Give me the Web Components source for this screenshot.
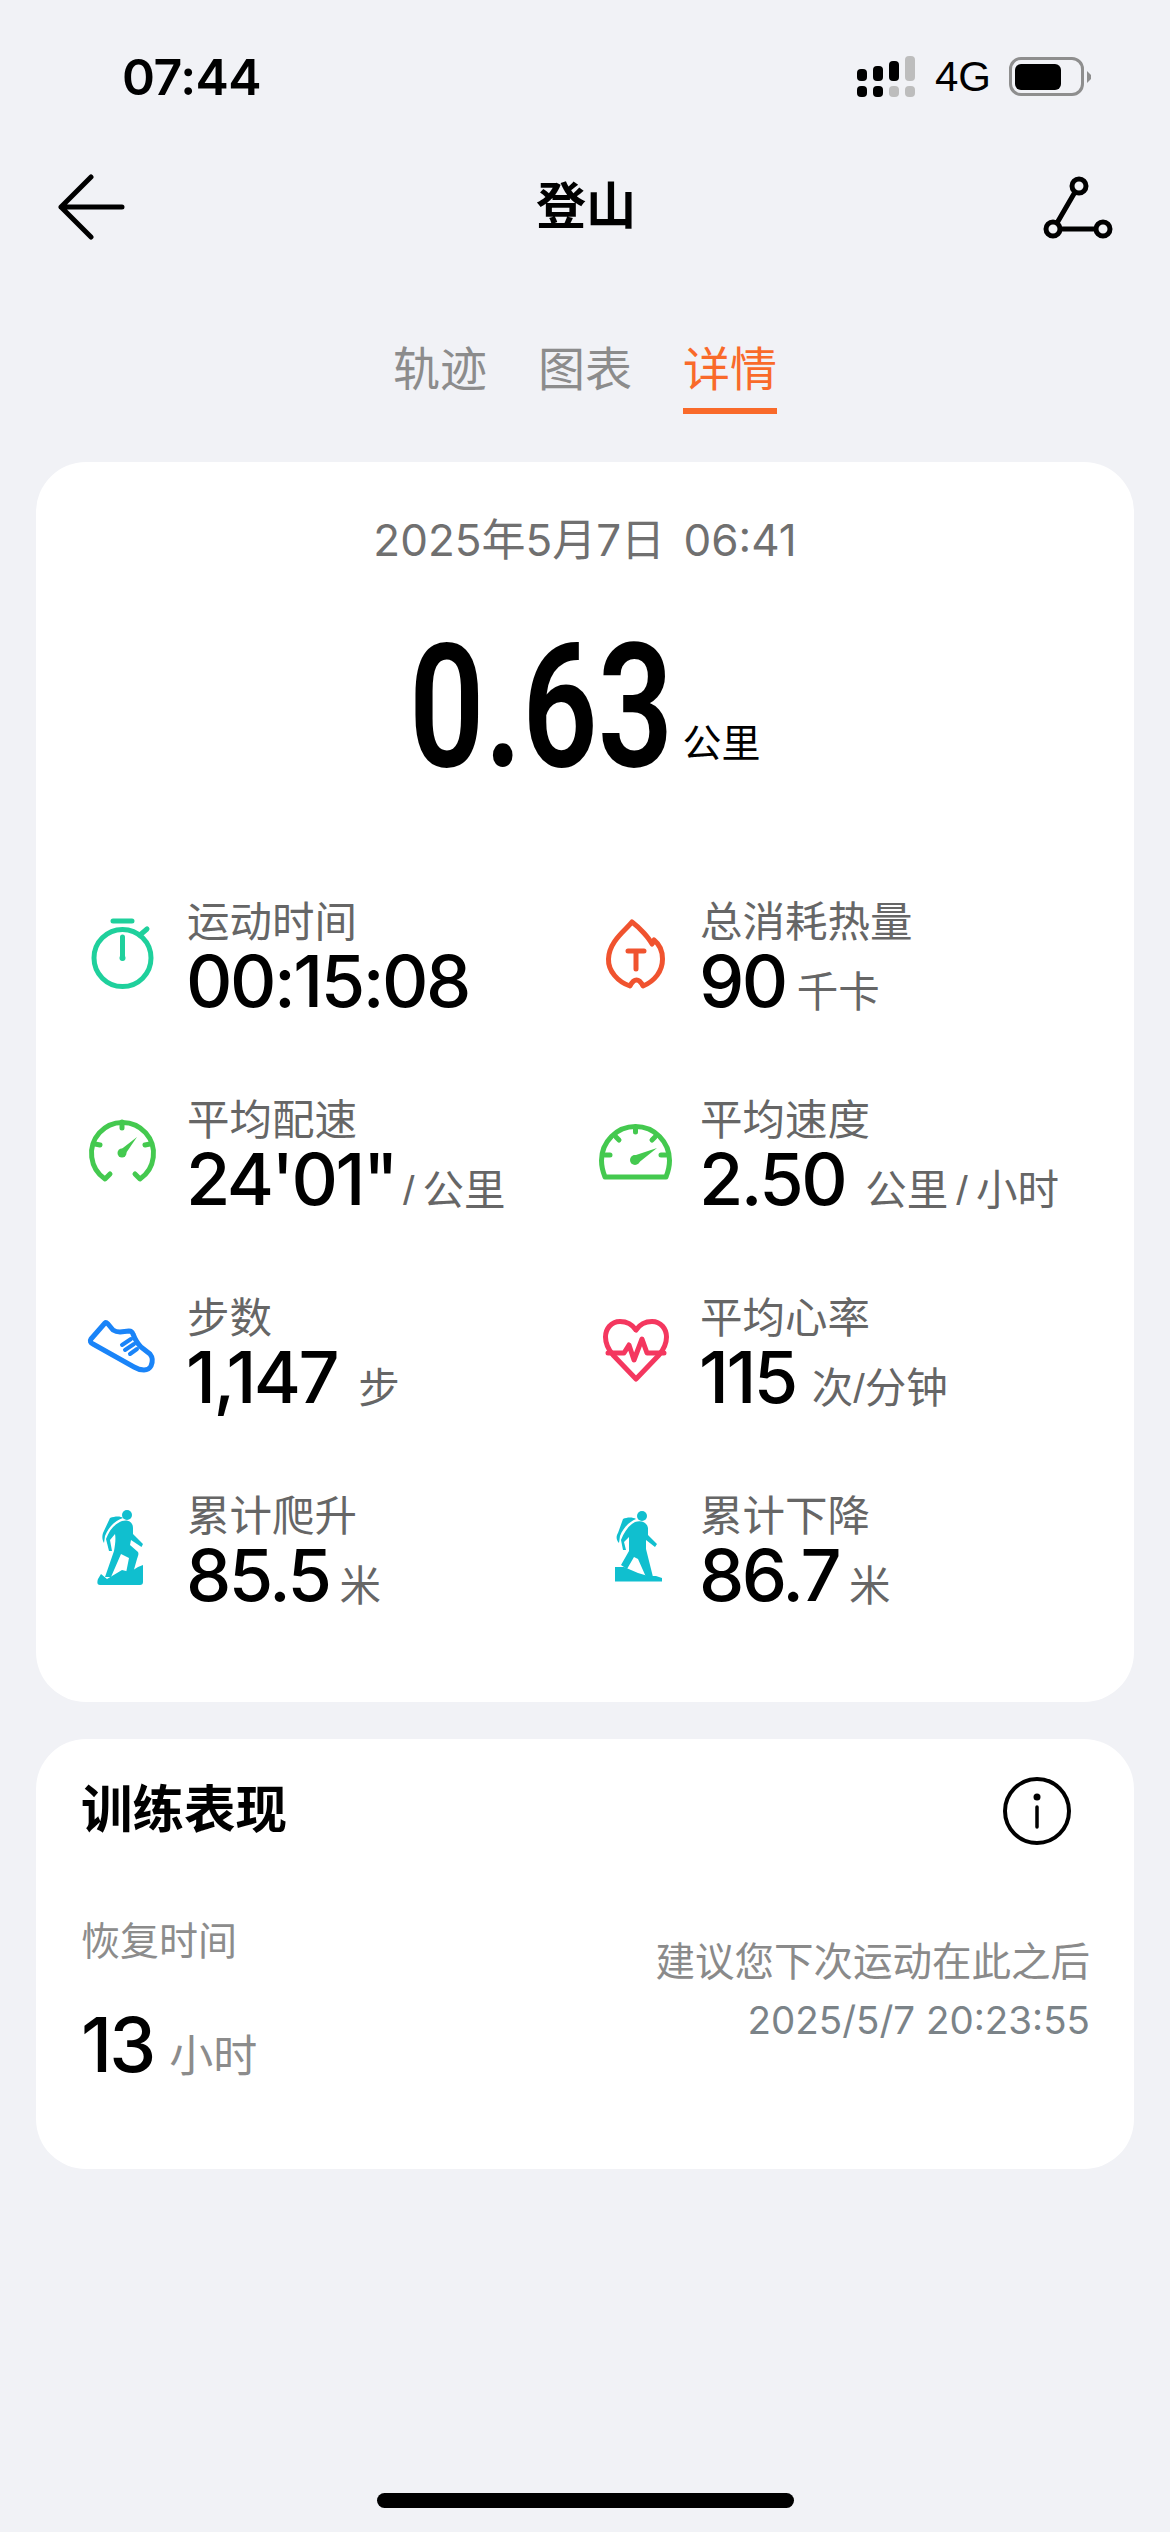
<!DOCTYPE html>
<html lang="zh">
<head>
<meta charset="utf-8">
<title>登山</title>
<style>
  html, body { margin: 0; padding: 0; background: #f1f2f6; }
  body { font-family: "Liberation Sans", "Noto Sans CJK SC", sans-serif; }
</style>
</head>
<body>

<activity-page>
  <status-bar></status-bar>
  <nav-header title="登山"></nav-header>
  <tab-strip></tab-strip>

  <summary-card date="2025年5月7日 06:41" distance="0.63" unit="公里">
    <metric-item label="运动时间" value="00:15:08">
      <svg slot="icon" viewBox="0 0 80 80" fill="none" stroke="#1fd09c" stroke-width="5" stroke-linecap="round">
        <circle cx="39.5" cy="45" r="28.5"/>
        <path d="M30 8h19M57 22l7-6M39.5 24v21"/>
        <circle cx="39.5" cy="45" r="3" fill="#1fd09c" stroke="none"/>
      </svg>
    </metric-item>
    <metric-item label="总消耗热量" value="90" unit="千卡" gap="11">
      <svg slot="icon" viewBox="0 0 80 80" fill="none" stroke="#f0532f" stroke-width="5" stroke-linecap="round" stroke-linejoin="round">
        <path d="M36 9C30 17 13 28 12.5 46C12 58 22 69 34 73C36 69 38 67 40.5 67C43 67 45 69 47 73C59 68 66.5 58 66.5 46C66.5 38 63 31 58 27C58 29 57 30 56 31C53 25 44 15 36 9Z"/>
        <path d="M32 38h16M40 38v18"/>
      </svg>
    </metric-item>
    <metric-item label="平均配速" value="24'01&quot;" unit="/ 公里" gap="7">
      <svg slot="icon" viewBox="0 0 80 80" fill="none" stroke="#44c94f" stroke-width="5" stroke-linecap="round" stroke-linejoin="round">
        <path d="M27 63L22 68A31 31 0 1 1 57 68L52 63"/>
        <path d="M39 11v6M12 33l5 1M67 33l-5 1"/>
        <circle cx="39" cy="42" r="4.5" fill="#44c94f" stroke="none"/>
        <path d="M54 26L41 45L36 40Z" fill="#44c94f" stroke="none"/>
      </svg>
    </metric-item>
    <metric-item label="平均速度" value="2.50" unit="公里 / 小时" gap="20">
      <svg slot="icon" viewBox="0 0 80 80" fill="none" stroke="#44c94f" stroke-width="5" stroke-linecap="round" stroke-linejoin="round">
        <path d="M9 66C7 61 5.5 57 5.5 49.500A34 34 0 0 1 73.500 49.500C73.500 57 72 61 70 66Z"/>
        <path d="M39.500 16v5M20 26l3 3M59 26l-3 3M9 44h5M70 44h-5"/>
        <circle cx="39" cy="49" r="5" fill="#44c94f" stroke="none"/>
        <path d="M61 37L41 53L37 45Z" fill="#44c94f" stroke="none"/>
      </svg>
    </metric-item>
    <metric-item label="步数" value="1,147" unit="步" gap="21">
      <svg slot="icon" viewBox="0 0 80 80" fill="none" stroke="#1a84f8" stroke-width="5" stroke-linecap="round" stroke-linejoin="round">
        <path d="M8 30L22 14Q23 13 25 15L30 21Q33 23 37 23L46 22Q49 22 50 25Q53 33 58 38L67 45Q71 50 68 57Q66 61 61 61Q56 61 51 58L10 35Q6 33 8 30Z"/>
        <path d="M39 36l9-6M42 41l9-6M47 45l7-5" stroke-width="4"/>
      </svg>
    </metric-item>
    <metric-item label="平均心率" value="115" unit="次/分钟" gap="16">
      <svg slot="icon" viewBox="0 0 80 80" fill="none" stroke="#f4375f" stroke-width="5" stroke-linecap="round" stroke-linejoin="round">
        <path d="M40 21C36 15 30 12.500 24 12.500C15 12.500 9.500 20 9.500 28C9.500 35 12 40 17 46L40 70L63 46C68 40 70.500 35 70.500 28C70.500 20 65 12.500 56 12.500C50 12.500 44 15 40 21Z"/>
        <path d="M12 44H28L33 36L38 51L46 30L51 44H68"/>
      </svg>
    </metric-item>
    <metric-item label="累计爬升" value="85.5" unit="米" gap="10">
      <svg slot="icon" viewBox="0 0 80 80" fill="#10bfcf">
        <circle cx="44" cy="8" r="5"/>
        <path d="M27 11C32 9 38 9 40 11C33 13 26 19 22 29L21 36C19 33 19 29 20 26Z"/>
        <path d="M39 14C45 12 50 15 50 21L50 27L60 37L58.500 40L48 33L47 38L55 45C56 47 55 49 54 52L50 66L43 66L46 51L38 47L28 70L22 70L31 44C32 38 33 32 32 27L27 33L29 44L26 44L23 32C26 24 31 17 39 14Z"/>
        <path d="M17 78C14 78 14 75 15 72L18 67L24 72L39 63L47 65L55 60L60 58V75C60 77 59 78 57 78Z"/>
      </svg>
    </metric-item>
    <metric-item label="累计下降" value="86.7" unit="米" gap="10">
      <svg slot="icon" viewBox="0 0 80 80" fill="#10bfcf">
        <circle cx="46" cy="9" r="5"/>
        <path d="M27 12C31 10 37 10 40 12C33 15 27 21 24 29L23 36C20 33 20 29 22 26Z"/>
        <path d="M39 15C45 13 51 15 52 21L52 28L61 37L59 40L50 33L50 42L57 70L50 70L42 52L38 50L31 62L25 58L33 44L33 30L28 35L30 43L27 43L25 33C28 25 33 18 39 15Z"/>
        <path d="M19 60L28 60L42 66L52 69L60 69L66 71V74.500H19Z"/>
      </svg>
    </metric-item>
  </summary-card>

  <training-card title="训练表现" caption="恢复时间" hours="13" unit="小时"
    note="建议您下次运动在此之后" stamp="2025/5/7 20:23:55"></training-card>

  <home-bar></home-bar>
</activity-page>

<script>
  class ActivityPage extends HTMLElement {
    constructor() {
      super();
      this.attachShadow({ mode: 'open' }).innerHTML = `
        <style>
          :host { display: block; width: 1170px; height: 2532px; background: #f1f2f6; overflow: hidden; }
        </style>
        <slot></slot>`;
    }
  }

  class StatusBar extends HTMLElement {
    constructor() {
      super();
      this.attachShadow({ mode: 'open' }).innerHTML = `
        <style>
          :host {
            display: flex; align-items: center; justify-content: space-between;
            height: 147px; box-sizing: border-box; padding: 0 78px 0 122px; color: #000;
          }
          .time { font: 600 50px/1 Inter, "Liberation Sans", sans-serif; letter-spacing: -0.5px; margin-top: 7px; }
          .right { display: flex; align-items: center; margin-top: 7px; }
          .net { font: 42px/1 "Liberation Sans", sans-serif; margin: 0 18px 0 20px; }
          svg { display: block; }
        </style>
        <span class="time">07:44</span>
        <div class="right">
          <svg width="58" height="42" viewBox="0 0 58 42">
            <g fill="#000">
              <rect x="0" y="13" width="10" height="12" rx="4"/><rect x="0" y="30" width="10" height="11" rx="4"/>
              <rect x="16" y="10" width="10" height="15" rx="4"/><rect x="16" y="30" width="10" height="11" rx="4"/>
              <rect x="32" y="5" width="10" height="20" rx="4"/>
            </g>
            <g fill="#bdbdbd">
              <rect x="32" y="30" width="10" height="11" rx="4"/>
              <rect x="48" y="0" width="10" height="25" rx="4"/><rect x="48" y="30" width="10" height="11" rx="4"/>
            </g>
          </svg>
          <span class="net">4G</span>
          <svg width="83" height="40" viewBox="0 0 83 40">
            <rect x="1.500" y="1.500" width="72" height="36" rx="10.500" fill="none" stroke="#8e8e8e" stroke-width="3"/>
            <rect x="6" y="7" width="46" height="26" rx="6" fill="#000"/>
            <path d="M78 14l4 4v4l-4 4z" fill="#8e8e8e"/>
          </svg>
        </div>`;
    }
  }

  class NavHeader extends HTMLElement {
    constructor() {
      super();
      this.attachShadow({ mode: 'open' }).innerHTML = `
        <style>
          :host {
            display: grid; grid-template-columns: 1fr auto 1fr; align-items: center;
            height: 120px; box-sizing: border-box; padding: 0 56px 0 58px;
          }
          h1 { margin: 0; font: 700 50px/1 "Liberation Sans", "Noto Sans CJK SC", sans-serif; color: #000; }
          svg { display: block; }
          .route { justify-self: end; }
        </style>
        <svg width="68" height="66" viewBox="0 0 68 66" fill="none" stroke="#000" stroke-width="5" stroke-linecap="round" stroke-linejoin="round">
          <path d="M33 3L3 33L33 63M3 33H64"/>
        </svg>
        <h1></h1>
        <svg class="route" width="72" height="66" viewBox="0 0 72 66" fill="none" stroke="#000" stroke-width="5">
          <circle cx="37" cy="12" r="7"/><circle cx="11" cy="55" r="7"/><circle cx="61" cy="55" r="7"/>
          <path d="M33 18L15 49M18 55H54"/>
        </svg>`;
      this.shadowRoot.querySelector('h1').textContent = this.getAttribute('title');
    }
  }

  class TabStrip extends HTMLElement {
    constructor() {
      super();
      this.attachShadow({ mode: 'open' }).innerHTML = `
        <style>
          :host {
            display: flex; justify-content: center; gap: 51px; height: 195px; box-sizing: border-box; padding-top: 70px;
            font: 47px/66px "Liberation Sans", "Noto Sans CJK SC", sans-serif; color: #8c8c8c;
          }
          span { display: block; height: 77px; box-sizing: border-box; }
          .on { color: #f96a2a; border-bottom: 6px solid #f96a2a; }
        </style>
        <span>轨迹</span><span>图表</span><span class="on">详情</span>`;
    }
  }

  class SummaryCard extends HTMLElement {
    constructor() {
      super();
      this.attachShadow({ mode: 'open' }).innerHTML = `
        <style>
          :host {
            display: block; box-sizing: border-box; height: 1240px; margin: 0 36px; padding-top: 52px;
            background: #fff; border-radius: 50px;
          }
          .date { text-align: center; font: 44px/52px Inter, "Noto Sans CJK SC", sans-serif; color: #707070; word-spacing: 6px; }
          .hero { display: flex; justify-content: center; align-items: flex-start; gap: 16px; height: 267px; margin-top: 41px; }
          .num { display: block; width: 257px; height: 200px; font: 700 173px/200px Roboto, sans-serif; color: #000; white-space: nowrap; }
          .num b { display: inline-block; font-weight: 600; transform: scaleX(.765); transform-origin: 0 50%; }
          .unit { font: 39px/1 "Liberation Sans", "Noto Sans CJK SC", sans-serif; color: #000; margin-top: 117px; }
          .grid { display: grid; grid-template-columns: 513px 513px; grid-auto-rows: 116px; row-gap: 82px; padding-left: 47px; margin-top: 21px; }
        </style>
        <div class="date"></div>
        <div class="hero"><span class="num"><b></b></span><span class="unit"></span></div>
        <div class="grid"><slot></slot></div>`;
      this.shadowRoot.querySelector('.date').textContent = this.getAttribute('date');
      this.shadowRoot.querySelector('b').textContent = this.getAttribute('distance');
      this.shadowRoot.querySelector('.unit').textContent = this.getAttribute('unit');
    }
  }

  class MetricItem extends HTMLElement {
    constructor() {
      super();
      this.attachShadow({ mode: 'open' }).innerHTML = `
        <style>
          :host { display: flex; align-items: center; gap: 24px; }
          .icon { flex: none; width: 80px; height: 80px; }
          ::slotted(svg) { display: block; width: 80px; height: 80px; }
          .label { font: 42.500px/56px "Liberation Sans", "Noto Sans CJK SC", sans-serif; color: #666; }
          .line { display: flex; align-items: baseline; height: 60px; white-space: nowrap; }
          .value { font: 500 72px/60px Inter, sans-serif; color: #000; letter-spacing: -2.500px; margin-left: -1px; }
          .unit { font: 41.500px/60px "Liberation Sans", "Noto Sans CJK SC", sans-serif; color: #666; word-spacing: -3.500px; }
        </style>
        <div class="icon"><slot name="icon"></slot></div>
        <div>
          <div class="label"></div>
          <div class="line"><span class="value"></span><span class="unit"></span></div>
        </div>`;
      const root = this.shadowRoot;
      root.querySelector('.label').textContent = this.getAttribute('label');
      root.querySelector('.value').textContent = this.getAttribute('value');
      const unit = root.querySelector('.unit');
      unit.textContent = this.getAttribute('unit') || '';
      unit.style.marginLeft = (this.getAttribute('gap') || 0) + 'px';
    }
  }

  class TrainingCard extends HTMLElement {
    constructor() {
      super();
      this.attachShadow({ mode: 'open' }).innerHTML = `
        <style>
          :host {
            display: block; box-sizing: border-box; height: 430px; margin: 37px 36px 0; padding: 34px 44px 0 45px;
            background: #fff; border-radius: 50px; font-family: Inter, "Noto Sans CJK SC", sans-serif;
          }
          .head { display: flex; justify-content: space-between; align-items: center; height: 76px; }
          h2 { margin: 0; font: 700 51.500px/1 "Liberation Sans", "Noto Sans CJK SC", sans-serif; color: #000; }
          svg { display: block; margin-right: 19px; }
          .body { display: flex; justify-content: space-between; margin-top: 64px; }
          .caption { font-size: 39px; line-height: 56px; color: #8c8c8c; }
          .hours { display: flex; align-items: baseline; margin-top: 36px; }
          .hours b { font: 500 75px/80px Inter, sans-serif; color: #000; letter-spacing: -3px; }
          .hours span { font-size: 44px; color: #8c8c8c; margin-left: 16px; }
          .right { text-align: right; padding-top: 20px; color: #8a8a8a; font-size: 39.500px; line-height: 58px; }
          .stamp { font-size: 38.500px; line-height: 58px; color: #7b8388; }
        </style>
        <div class="head">
          <h2></h2>
          <svg width="68" height="68" viewBox="0 0 68 68" fill="none" stroke="#000" stroke-width="4">
            <circle cx="34" cy="34" r="32"/>
            <circle cx="34" cy="20" r="3.500" fill="#000" stroke="none"/>
            <path d="M34 30V50" stroke-width="3.500" stroke-linecap="round"/>
          </svg>
        </div>
        <div class="body">
          <div>
            <div class="caption"></div>
            <div class="hours"><b></b><span></span></div>
          </div>
          <div class="right"><div class="note"></div><div class="stamp"></div></div>
        </div>`;
      const root = this.shadowRoot;
      root.querySelector('h2').textContent = this.getAttribute('title');
      root.querySelector('.caption').textContent = this.getAttribute('caption');
      root.querySelector('.hours b').textContent = this.getAttribute('hours');
      root.querySelector('.hours span').textContent = this.getAttribute('unit');
      root.querySelector('.note').textContent = this.getAttribute('note');
      root.querySelector('.stamp').textContent = this.getAttribute('stamp');
    }
  }

  class HomeBar extends HTMLElement {
    constructor() {
      super();
      this.attachShadow({ mode: 'open' }).innerHTML = `
        <style>
          :host { display: block; width: 417px; height: 15px; margin: 324px 0 0 377px; background: #000; border-radius: 8px; }
        </style>`;
    }
  }

  customElements.define('activity-page', ActivityPage);
  customElements.define('status-bar', StatusBar);
  customElements.define('nav-header', NavHeader);
  customElements.define('tab-strip', TabStrip);
  customElements.define('summary-card', SummaryCard);
  customElements.define('metric-item', MetricItem);
  customElements.define('training-card', TrainingCard);
  customElements.define('home-bar', HomeBar);
</script>
</body>
</html>
